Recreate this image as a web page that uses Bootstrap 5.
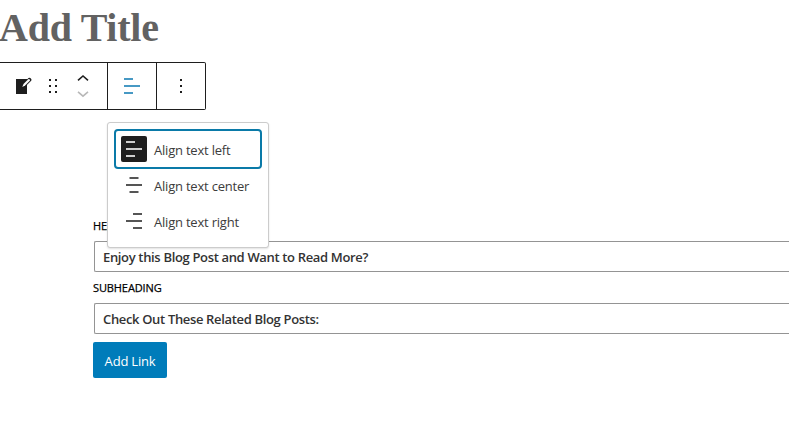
<!DOCTYPE html>
<html lang="en">
<head>
<meta charset="utf-8">
<meta name="viewport" content="width=device-width, initial-scale=1">
<title>Add Title</title>
<link href="https://cdn.jsdelivr.net/npm/bootstrap@5.3.0/dist/css/bootstrap.min.css" rel="stylesheet">
<style>
body{font-family:"Segoe UI","Open Sans","Noto Sans",sans-serif;font-size:13px;color:#1e1e1e;height:437px}
.post-title{font:700 40px/46px "Liberation Serif",serif;color:#626262;margin:5px 0 0 -1px;letter-spacing:-.25px}
.block-bar{width:206px;height:48px;margin-top:11px;border:1px solid #1e1e1e;border-left:0;border-radius:0 2px 2px 0}
.bar-group{border-right:1px solid #1e1e1e}
.group-main{width:108px}.group-align{width:49px}.group-more{width:48px}
.align-menu{top:59px;left:107px;width:162px;height:126px;padding:6px;min-width:0;border:1px solid #ccc;border-radius:3px;box-shadow:0 1px 2px rgba(0,0,0,.12);font-size:13px}
.align-menu .dropdown-item{height:36px;padding:0 7px;color:#3c3c3c;gap:7px;letter-spacing:-.21px}
.align-menu .dropdown-item span{padding-top:3px}
.align-menu .dropdown-item.chosen{height:40px;padding:0 5px;border:2px solid #0a7aa8;border-radius:4px;margin-bottom:-2px;background:#fff}
.glyph-box{width:26px;height:26px;border-radius:2px;flex:none}
.chosen .glyph-box{background:#1e1e1e;color:#eee}
.fields{margin:109px 0 0 93px}
.field-label{font-size:11px;line-height:14px;color:#000;-webkit-text-stroke:.25px #000;display:block;letter-spacing:-.1px}
.field-box{height:31px;border:1px solid #949494;border-right:0;border-radius:2px 0 0 2px;margin:8px 0 0 1px;padding:2px 8px 0;font-weight:600;font-size:13px;color:#333;letter-spacing:-.34px}
.field-box + .field-label{margin-top:9px}
.link-btn{width:74px;height:36px;background:#007cba;color:#fff;font-size:13px;border-radius:2px;padding:3px 0 0;border:0;margin-top:8px;letter-spacing:-.2px}
</style>
<script src="https://cdn.jsdelivr.net/npm/bootstrap@5.3.0/dist/js/bootstrap.bundle.min.js"></script>
</head>
<body class="overflow-hidden bg-white">
<h1 class="post-title">Add Title</h1>
<div class="block-bar d-flex position-relative">
  <div class="bar-group group-main d-flex">
    <svg width="107" height="46" viewBox="0 63 107 46" aria-hidden="true">
      <path d="M16 79h11v15H16z" fill="#1e1e1e"/>
      <path d="M22 87.500l1.300-4.200 5.200-5.200q1.200-.9 2.400.3 1.200 1.200.3 2.400l-5.300 5.200z" fill="#1e1e1e"/>
      <path d="M22.300 87l1.200-3 4.800-4.700q.8-.5 1.400.1.600.6.100 1.400l-4.700 4.800z" fill="#fff"/>
      <path d="M49 79h2v2h-2zm6 0h2v2h-2zm-6 6h2v2h-2zm6 0h2v2h-2zm-6 6h2v2h-2zm6 0h2v2h-2z" fill="#1e1e1e"/>
      <path d="M78 80.300l5-4.300 5 4.300" fill="none" stroke="#1e1e1e" stroke-width="1.600"/>
      <path d="M78 91.900l5 4.300 5-4.300" fill="none" stroke="#b8b8b8" stroke-width="1.600"/>
    </svg>
  </div>
  <div class="bar-group group-align">
    <svg width="48" height="46" viewBox="108 63 48 46" aria-hidden="true"><path d="M124 78h9v2h-9zm0 7h16v2h-16zm0 7h9v2h-9z" fill="#4799c4"/></svg>
  </div>
  <div class="group-more">
    <svg width="48" height="46" viewBox="157 63 48 46" aria-hidden="true"><path d="M180 79h2v2h-2zm0 6h2v2h-2zm0 6h2v2h-2z" fill="#1e1e1e"/></svg>
  </div>
  <div class="dropdown-menu align-menu d-block">
    <a class="dropdown-item chosen d-flex align-items-center"><svg class="glyph-box" viewBox="0 0 26 26"><path d="M5 5h9v2H5zm0 7h16v2H5zm0 7h9v2H5z" fill="currentColor" opacity=".85"/></svg><span>Align text left</span></a>
    <a class="dropdown-item d-flex align-items-center"><svg class="glyph-box" viewBox="0 0 26 26"><path d="M8.500 5h9v2h-9zM5 12h16v2H5zM8.500 19h9v2h-9z" fill="#555"/></svg><span>Align text center</span></a>
    <a class="dropdown-item d-flex align-items-center"><svg class="glyph-box" viewBox="0 0 26 26"><path d="M12 5h9v2h-9zM5 12h16v2H5zM12 19h9v2h-9z" fill="#555"/></svg><span>Align text right</span></a>
  </div>
</div>
<div class="fields">
  <label class="field-label">HEADING</label>
  <div class="field-box d-flex align-items-center"><span>Enjoy this Blog Post and Want to Read More?</span></div>
  <label class="field-label">SUBHEADING</label>
  <div class="field-box d-flex align-items-center"><span>Check Out These Related Blog Posts:</span></div>
  <button class="btn link-btn" type="button">Add Link</button>
</div>
</body>
</html>
